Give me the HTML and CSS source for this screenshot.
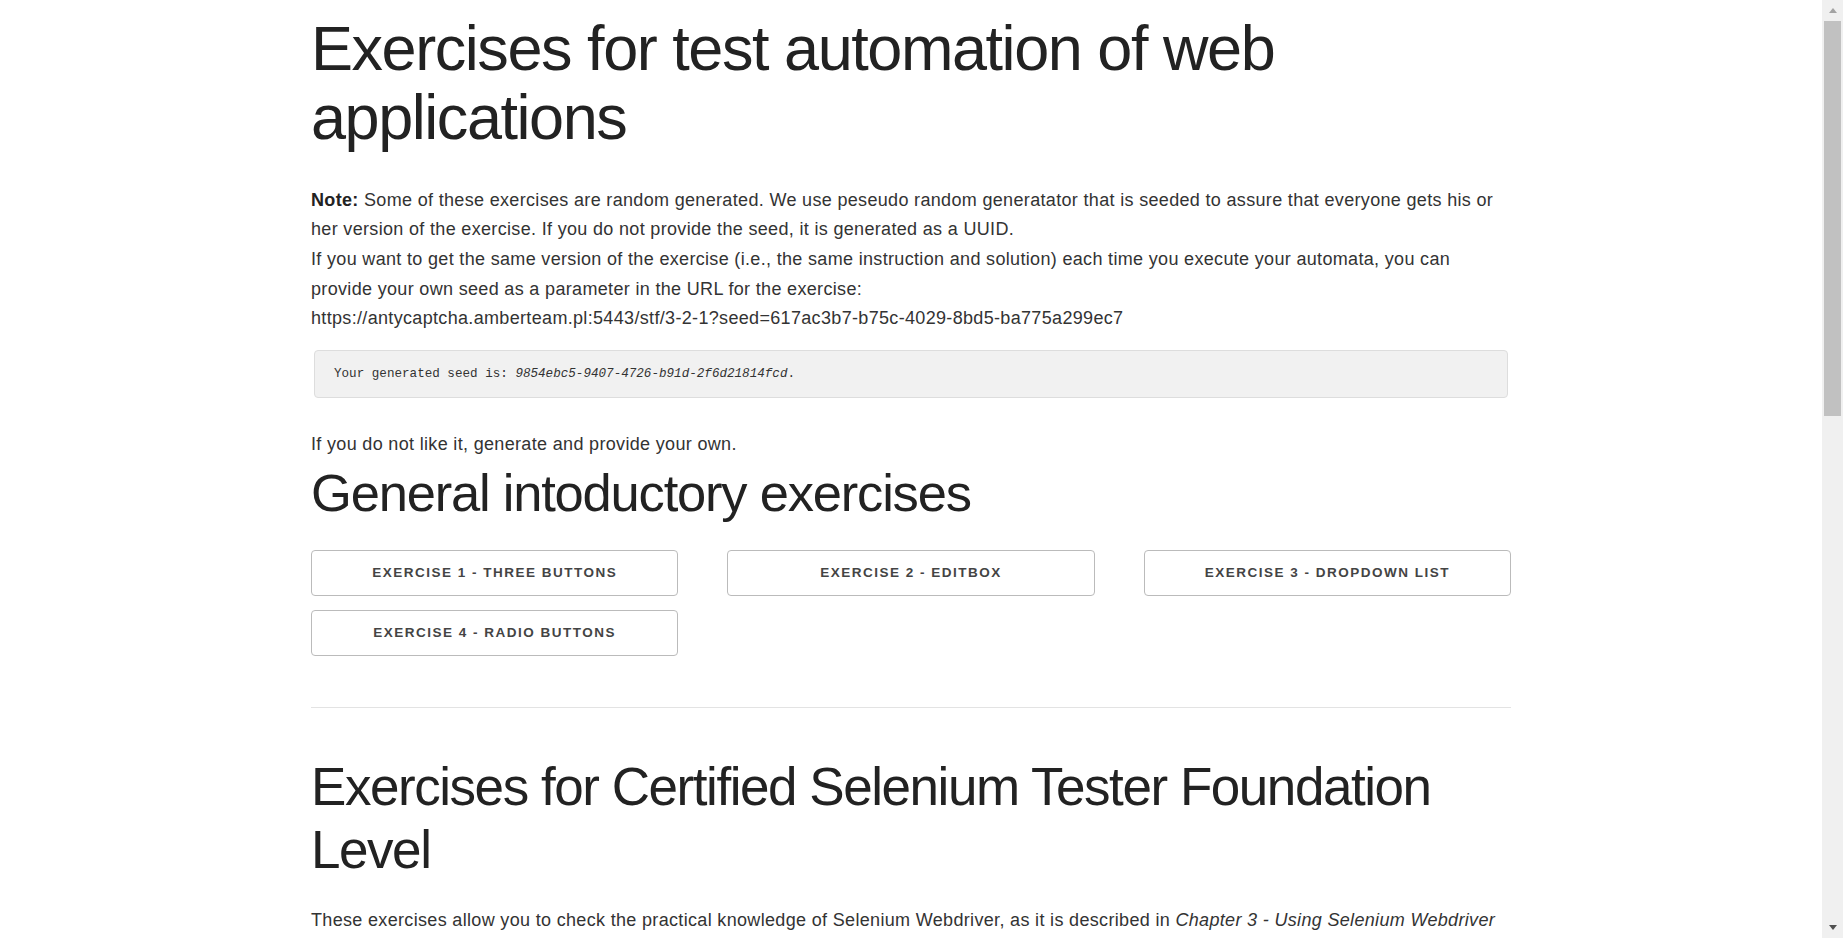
FILE: index.html
```html
<!DOCTYPE html>
<html lang="en">
<head>
<meta charset="utf-8">
<title>Exercises for test automation of web applications</title>
<link rel="stylesheet" href="styles.css">
</head>
<body>
<main class="container">
  <h1 class="title">Exercises for test automation of web applications</h1>
  <p class="note"><strong>Note:</strong> Some of these exercises are random generated. We use peseudo random generatator that is seeded to assure that everyone gets his or her version of the exercise. If you do not provide the seed, it is generated as a UUID.<br>If you want to get the same version of the exercise (i.e., the same instruction and solution) each time you execute your automata, you can provide your own seed as a parameter in the URL for the exercise:<br>https://antycaptcha.amberteam.pl:5443/stf/3-2-1?seed=617ac3b7-b75c-4029-8bd5-ba775a299ec7</p>
  <pre class="seed">Your generated seed is: <em>9854ebc5-9407-4726-b91d-2f6d21814fcd</em>.</pre>
  <p class="own">If you do not like it, generate and provide your own.</p>
  <h2 class="section">General intoductory exercises</h2>
  <div class="grid">
    <a class="btn" href="#">Exercise 1 - Three buttons</a>
    <a class="btn" href="#">Exercise 2 - Editbox</a>
    <a class="btn" href="#">Exercise 3 - Dropdown list</a>
    <a class="btn" href="#">Exercise 4 - Radio buttons</a>
  </div>
  <hr class="rule">
  <h1 class="subtitle">Exercises for Certified Selenium Tester Foundation Level</h1>
  <p class="intro">These exercises allow you to check the practical knowledge of Selenium Webdriver, as it is described in <em>Chapter 3 - Using Selenium Webdriver</em> of the Certified Selenium Tester Foundation Level syllabus.</p>
  <div class="grid">
    <a class="btn" href="#">Exercise 3.2.1</a>
    <a class="btn" href="#">Exercise 3.2.2</a>
    <a class="btn" href="#">Exercise 3.3.1</a>
    <a class="btn" href="#">Exercise 3.3.2</a>
    <a class="btn" href="#">Exercise 3.4.1</a>
    <a class="btn" href="#">Exercise 3.4.2</a>
  </div>
</main>
<aside class="scrollbar" aria-hidden="true">
  <div class="sb-arrow sb-up"><span class="tri tri-up"></span></div>
  <div class="sb-track">
    <div class="sb-thumb"></div>
  </div>
  <div class="sb-arrow sb-down"><span class="tri tri-down"></span></div>
</aside>
</body>
</html>
```

FILE: styles.css
```css
html, body {
  margin: 0;
  padding: 0;
  background: #ffffff;
}

body {
  padding-right: 21px;
  font-family: "Liberation Sans", Arial, sans-serif;
  font-size: 18px;
  line-height: 1.65;
  letter-spacing: 0.33px;
  color: #333333;
}

.container {
  width: 1200px;
  margin: 0 auto;
  padding: 14px 0 1100px;
}

.title {
  font-size: 63px;
  font-weight: 400;
  line-height: 1.1;
  letter-spacing: -1.45px;
  color: #222222;
  margin: 0 0 33px;
}

.subtitle {
  font-size: 53px;
  font-weight: 400;
  line-height: 1.18;
  letter-spacing: -1.45px;
  color: #222222;
  margin: 48px 0 24px;
}

.note {
  margin: 0;
}

.note strong {
  color: #222222;
}

.seed {
  margin: 16px 3px 0;
  padding: 14px 19px;
  background: #f1f1f1;
  border: 1px solid #dddddd;
  border-radius: 4px;
  font-family: "Liberation Mono", "DejaVu Sans Mono", monospace;
  font-size: 12.6px;
  line-height: 18px;
  letter-spacing: 0;
  color: #333333;
}

.own {
  margin: 32px 0 0;
}

.section {
  font-size: 52.5px;
  font-weight: 400;
  line-height: 1.1;
  letter-spacing: -1.2px;
  color: #222222;
  margin: 4px 0 29px;
}

.grid {
  display: grid;
  grid-template-columns: repeat(3, 1fr);
  column-gap: 49px;
  row-gap: 14px;
}

.btn {
  display: flex;
  align-items: center;
  justify-content: center;
  height: 46px;
  box-sizing: border-box;
  border: 1px solid #bbbbbb;
  border-radius: 4px;
  background: #ffffff;
  color: #444444;
  text-decoration: none;
  text-transform: uppercase;
  font-size: 13.5px;
  font-weight: 700;
  letter-spacing: 1.5px;
}

.rule {
  border: 0;
  border-top: 1px solid #e3e3e3;
  margin: 51px 0 0;
}

.intro {
  margin: 0 0 20px;
}

/* simulated browser scrollbar overlaying the right edge */
.scrollbar {
  position: fixed;
  top: 0;
  right: 0;
  bottom: 0;
  width: 21px;
  background: #f0f0f0;
  display: flex;
  flex-direction: column;
}

.sb-arrow {
  height: 21px;
  display: flex;
  align-items: center;
  justify-content: center;
}

.sb-track {
  flex: 1;
  padding: 0 2px;
}

.sb-thumb {
  height: 395px;
  background: #c1c1c1;
}

.tri {
  width: 0;
  height: 0;
  border-left: 4.5px solid transparent;
  border-right: 4.5px solid transparent;
}

.tri-up {
  border-bottom: 5px solid #a3a3a3;
}

.tri-down {
  border-top: 5px solid #505050;
}
```
